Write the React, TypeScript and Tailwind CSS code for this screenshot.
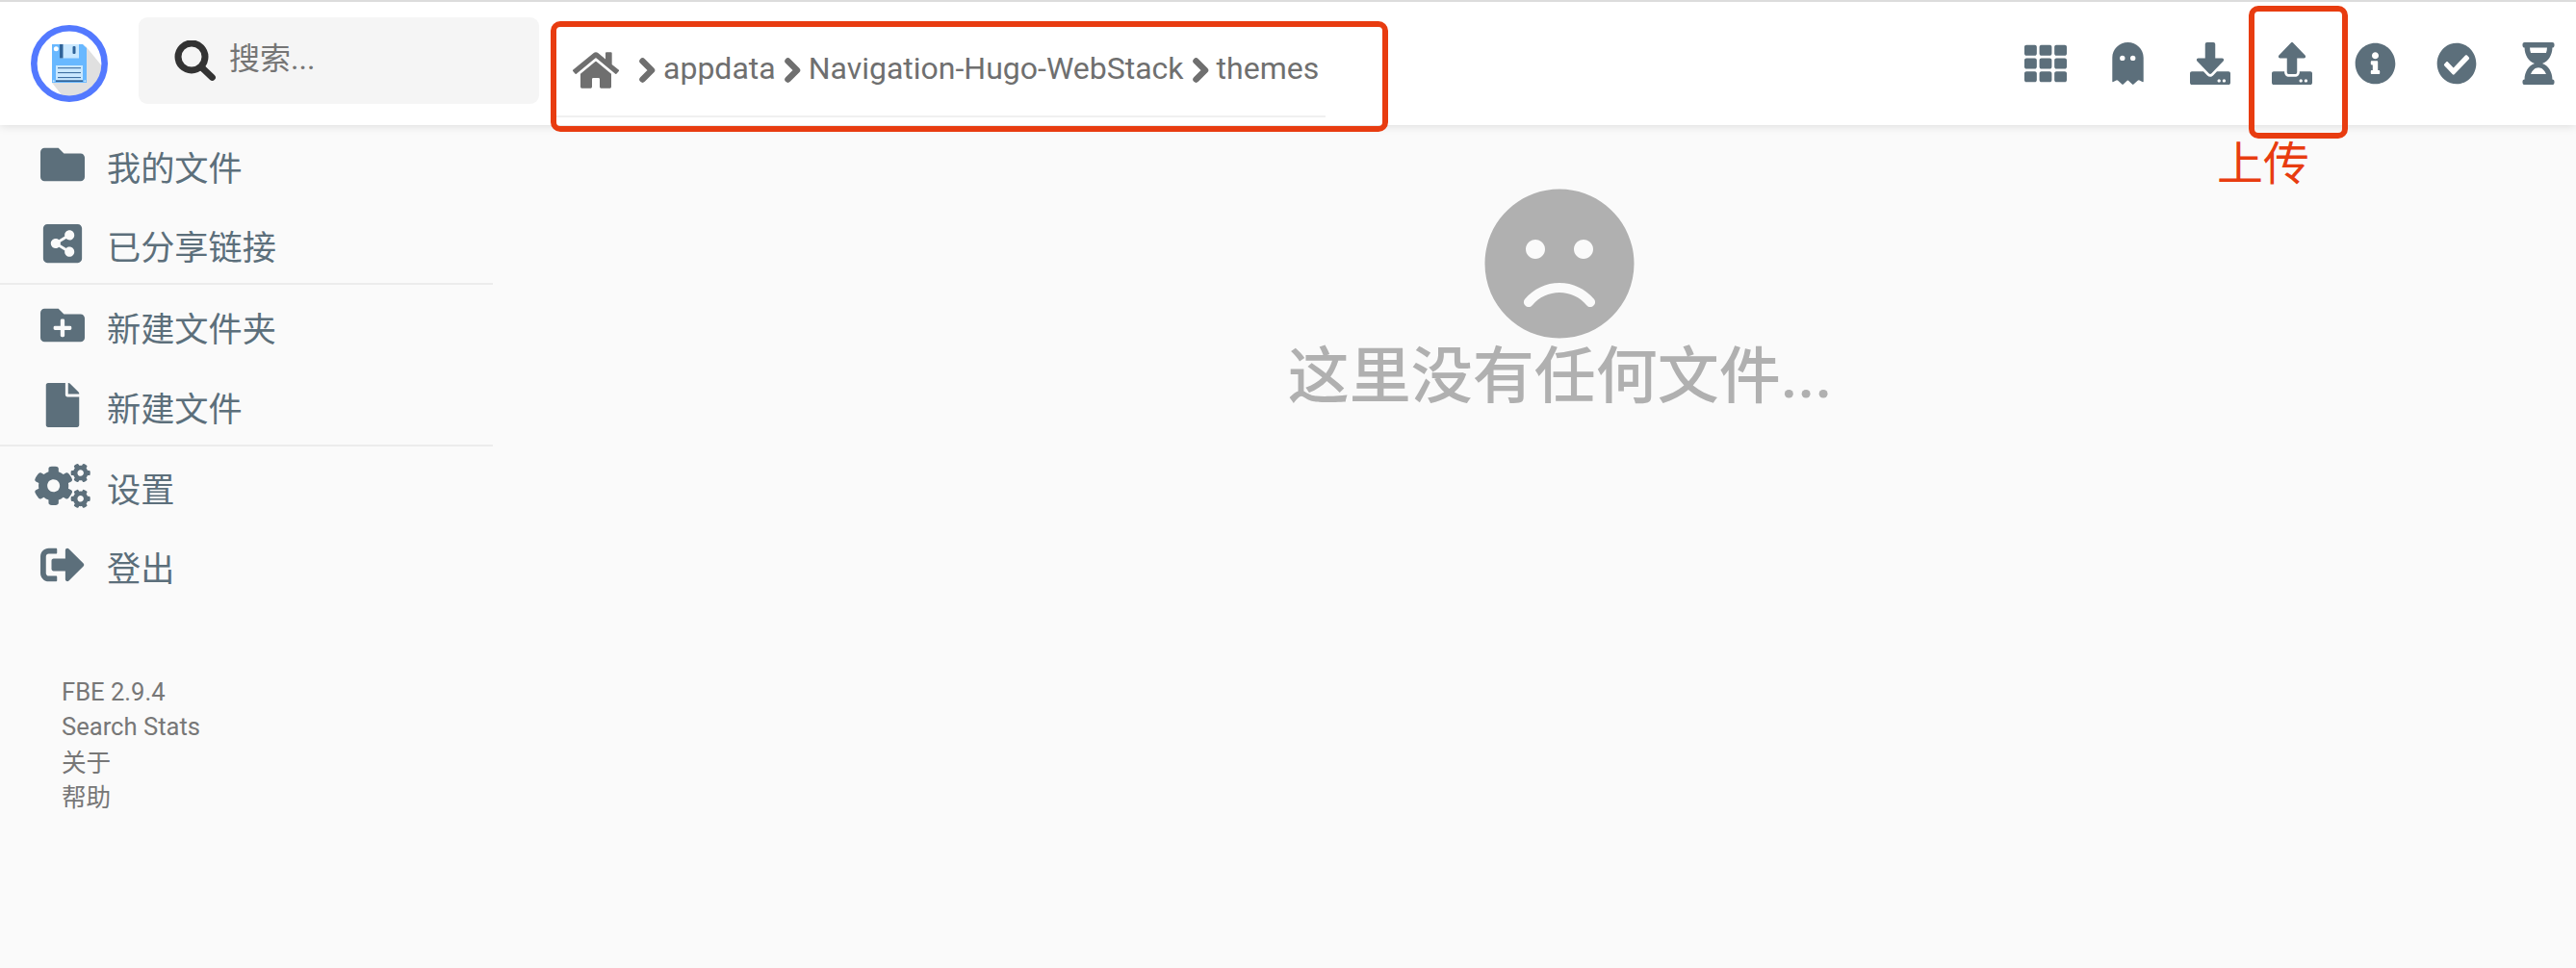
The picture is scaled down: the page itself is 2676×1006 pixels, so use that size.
import React from "react";
import {
  FaHome, FaTh, FaDownload, FaUpload, FaInfoCircle,
  FaCheckCircle, FaHourglassHalf, FaFolder, FaShareAltSquare, FaFolderPlus, FaFile,
  FaCogs, FaFrown,
} from "react-icons/fa";

function SignOutIcon() {
  return (
    <svg viewBox="0 0 512 512" className="size-[46px]" fill="currentColor">
      <path d="M497 273L329 441c-15 15-41 4.500-41-17v-96H152c-13.300 0-24-10.700-24-24v-96c0-13.300 10.700-24 24-24h136V88c0-21.400 25.900-32 41-17l168 168c9.300 9.400 9.300 24.600 0 34zM192 436v-40c0-6.600-5.400-12-12-12H96c-17.700 0-32-14.300-32-32V160c0-17.700 14.300-32 32-32h84c6.600 0 12-5.400 12-12V76c0-6.600-5.400-12-12-12H96c-53 0-96 43-96 96v192c0 53 43 96 96 96h84c6.600 0 12-5.400 12-12z" />
    </svg>
  );
}

function GhostIcon() {
  return (
    <svg viewBox="0 0 33 44" className="ml-px h-11 w-[33px]" fill="currentColor" fillRule="evenodd">
      <path d="M16.500 0C25.500 0 32.700 7 32.700 16V40.500Q32.700 41.800 31.500 41L28.500 39.400Q27.500 39 26.700 39.700L22.500 43.600Q21.800 44.200 21 43.600L17 39.800Q16.400 39.200 15.800 39.800L11.800 43.600Q11 44.200 10.300 43.600L6.200 39.700Q5.400 39 4.400 39.400L1.400 41Q0.300 41.800 0.300 40.500V16C0.300 7 7.500 0 16.500 0ZM10.800 13.700a2.700 2.700 0 1 0 0 5.400a2.700 2.700 0 1 0 0-5.400ZM21.700 13.700a2.700 2.700 0 1 0 0 5.400a2.700 2.700 0 1 0 0-5.400Z" />
    </svg>
  );
}

function SearchIcon() {
  return (
    <svg viewBox="0 0 44 43" className="ml-[37px] mt-6 h-[43px] w-11 shrink-0" fill="none" stroke="#333">
      <circle cx="18" cy="17" r="14" strokeWidth="7" />
      <path d="M29.500 29L39.500 38.500" strokeWidth="6.800" strokeLinecap="round" />
      <path d="M26 25.500L31 30.500" strokeWidth="6" />
    </svg>
  );
}

function Chevron({ className }: { className: string }) {
  return (
    <svg viewBox="0 0 17 26" className={`mt-8 h-[26px] w-[17px] shrink-0 ${className}`} fill="none" stroke="currentColor" strokeWidth="6.500" strokeLinecap="round" strokeLinejoin="round">
      <path d="M3.500 3.500L13 13L3.500 22.500" />
    </svg>
  );
}

function Logo() {
  return (
    <svg viewBox="0 0 80 80" className="ml-8 mt-[24px] size-20 shrink-0">
      <circle cx="40" cy="40" r="36.500" fill="#fff" />
      <clipPath id="disc"><circle cx="40" cy="40" r="34" /></clipPath>
      <path d="M57 22L80 50L60 90L41 84L22 60Z" fill="#e0e0e0" clipPath="url(#disc)" />
      <path d="M22 20h32l4 4v36h-36z" fill="#68b8ff" />
      <rect x="30" y="20" width="20" height="14.500" fill="#c9e8ff" />
      <rect x="30" y="20" width="3.500" height="14.500" fill="#2f6399" />
      <rect x="43.500" y="22" width="3" height="8" rx="1" fill="#2f6399" />
      <circle cx="26.300" cy="24.700" r="2.500" fill="#fff" />
      <rect x="26" y="42" width="28" height="16" fill="#c9e8ff" />
      <path d="M28 44.700h24M28 49.600h24M28 54.600h24" stroke="#2f6399" strokeWidth="1" />
      <rect x="26" y="57.300" width="28" height="1.700" fill="#2f6399" />
      <circle cx="23.700" cy="58.300" r="1" fill="#c9e8ff" />
      <circle cx="56.300" cy="58.300" r="1" fill="#c9e8ff" />
      <circle cx="40" cy="40" r="36.700" fill="none" stroke="#5379ff" strokeWidth="6.600" />
    </svg>
  );
}

function Item({ icon, label, h }: { icon: React.ReactNode; label: string; h: string }) {
  return (
    <a className={`flex items-center ${h}`}>
      <span className="ml-[35px] flex w-[60px] shrink-0 justify-center text-[46px]">{icon}</span>
      <span className="ml-4 pt-[9px] text-[35.200px] leading-[46px]">{label}</span>
    </a>
  );
}

const actions = [
  <FaTh className="size-11" />,
  <GhostIcon />,
  <FaDownload className="h-11 w-[42px]" preserveAspectRatio="none" />,
  <FaUpload className="h-11 w-[42px]" preserveAspectRatio="none" />,
  <FaInfoCircle className="ml-px h-11 w-[43px]" preserveAspectRatio="none" />,
  <FaCheckCircle className="h-11 w-[42px]" preserveAspectRatio="none" />,
  <FaHourglassHalf className="size-11" />,
];
const crumbs = [
  { name: "appdata", chevron: "ml-[21px]", text: "ml-2" },
  { name: "Navigation-Hugo-WebStack", chevron: "ml-[9px]", text: "ml-2" },
  { name: "themes", chevron: "ml-[9px]", text: "ml-2" },
];

export default function App() {
  return (
    <div className="h-[1006px] w-[2676px] overflow-hidden bg-[#fafafa] font-['Roboto','Noto_Sans_CJK_SC',sans-serif]">
      <header className="relative flex h-[130px] border-t-2 border-[#dcdcdc] bg-white shadow-[0_0_10px_rgba(0,0,0,0.15)]">
        <Logo />
        <div className="ml-8 mt-4 flex h-[90px] w-[416px] shrink-0 rounded-[9px] bg-[#f5f5f5]">
          <SearchIcon />
          <span className="ml-[13px] mt-[20px] text-[32px] leading-[46px] text-[#757575]">搜索...</span>
        </div>
        <div className="ml-3 mt-5 flex h-[115px] w-[870px] shrink-0 rounded-[10px] border-[6px] border-[#e83c10]">
          <div className="flex h-[94px] w-[799px] items-start border-b-2 border-[#f0f0f0] pl-[17px] text-[32px] text-[#6f6f6f]">
            <FaHome className="mt-[21px] size-12 shrink-0" />
            {crumbs.map(({ name, chevron, text }) => (
              <React.Fragment key={name}>
                <Chevron className={chevron} />
                <span className={`mt-[24px] whitespace-nowrap leading-[38px] ${text}`}>{name}</span>
              </React.Fragment>
            ))}
          </div>
        </div>
        <nav className="mr-[-4px] ml-auto flex h-[128px] shrink-0 items-center text-[#5c6f7b]">
          {actions.map((icon, i) => (
            <span key={i} className="flex w-[85.400px] shrink-0 justify-center">{icon}</span>
          ))}
        </nav>
        <div className="absolute left-[2336px] top-[4px] h-[138px] w-[103px] rounded-[10px] border-[6px] border-[#e83c10]" />
        <span className="absolute left-[2303px] top-[137px] text-[48px] leading-[64px] text-[#e83c10]">上传</span>
      </header>
      <div className="flex">
        <aside className="w-[512px] shrink-0 text-[#5c6f7b]">
          <div className="border-b-2 border-[#ececec]">
            <Item h="h-[82px]" icon={<FaFolder />} label="我的文件" />
            <Item h="h-[82px]" icon={<FaShareAltSquare />} label="已分享链接" />
          </div>
          <div className="border-b-2 border-[#ececec]">
            <Item h="h-[84px]" icon={<FaFolderPlus />} label="新建文件夹" />
            <Item h="h-[82px]" icon={<FaFile />} label="新建文件" />
          </div>
          <Item h="h-[82px]" icon={<FaCogs className="w-[58px]" />} label="设置" />
          <Item h="h-[82px]" icon={<SignOutIcon />} label="登出" />
          <div className="ml-16 mt-[73px] text-[25.600px] leading-[36px] text-[#777]">
            <p>FBE 2.9.4</p>
            <p>Search Stats</p>
            <p className="pt-[2px]">关于</p>
            <p>帮助</p>
          </div>
        </aside>
        <main className="ml-[51px] flex w-[2113px] flex-col items-center pt-[64px] text-[#b0b0b0]">
          <FaFrown className="size-40" />
          <h2 className="mt-[-8px] pl-[2px] text-[64px] font-medium leading-[92px]">这里没有任何文件...</h2>
        </main>
      </div>
    </div>
  );
}
